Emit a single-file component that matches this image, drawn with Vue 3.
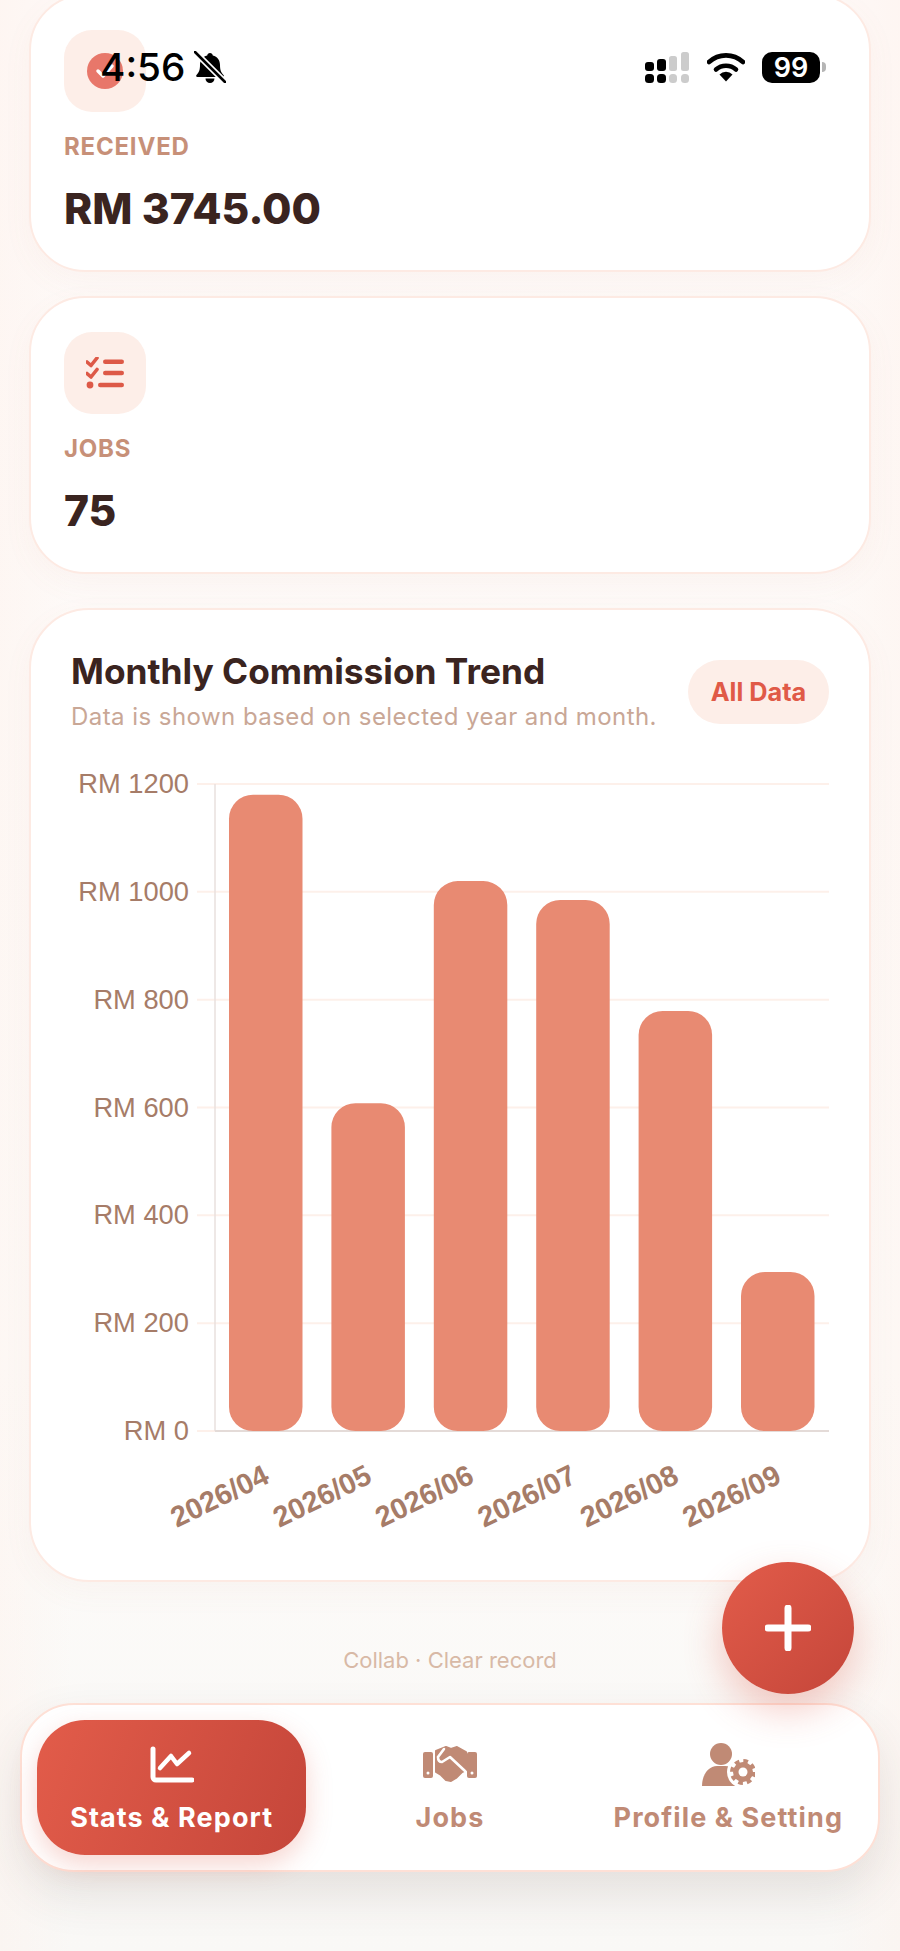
<template>
  <div class="page">
    <main class="content">
      <section class="card stat">
        <div class="stat-icon">
          <svg width="36" height="36" viewBox="0 0 36 36">
            <circle cx="18" cy="18" r="18" fill="#e8776a" />
            <path d="M11 18l5 5 9-10" fill="none" stroke="#fff" stroke-width="3.5" stroke-linecap="round" stroke-linejoin="round" />
          </svg>
        </div>
        <div class="stat-label">RECEIVED</div>
        <div class="stat-value">RM 3745.00</div>
      </section>

      <section class="card stat">
        <div class="stat-icon">
          <svg width="38" height="32" viewBox="0 0 38 32" fill="#dd5947">
            <path d="M1 5l4 3.500L11 1" fill="none" stroke="#dd5947" stroke-width="3.600" stroke-linecap="round" stroke-linejoin="round" />
            <path d="M1 16.500l4 3.500 6-7.500" fill="none" stroke="#dd5947" stroke-width="3.600" stroke-linecap="round" stroke-linejoin="round" />
            <circle cx="4" cy="28" r="3.400" />
            <rect x="17" y="2.500" width="21" height="4.400" rx="2.200" />
            <rect x="17" y="13.800" width="21" height="4.400" rx="2.200" />
            <rect x="12" y="25.800" width="26" height="4.400" rx="2.200" />
          </svg>
        </div>
        <div class="stat-label">JOBS</div>
        <div class="stat-value">75</div>
      </section>

      <section class="card trend">
        <div class="trend-head">
          <div>
            <h2>Monthly Commission Trend</h2>
            <p>Data is shown based on selected year and month.</p>
          </div>
          <span class="pill">All Data</span>
        </div>
        <svg class="chart" width="757" height="780" viewBox="72 760 757 780">
          <line v-for="t in ticks" :key="t" x1="197" x2="829" :y1="yFor(t)" :y2="yFor(t)" stroke="#fdf0ea" stroke-width="2" />
          <line x1="215" x2="215" y1="784" y2="1431" stroke="#e8e1de" stroke-width="1.500" />
          <line x1="215" x2="829" y1="1431" y2="1431" stroke="#e4dbd8" stroke-width="2" />
          <text v-for="t in ticks" :key="'l' + t" x="189" :y="yFor(t) + 9" class="y-tick" text-anchor="end">RM {{ t }}</text>
          <path v-for="(b, i) in bars" :key="b.month" :d="barPath(i, b.value)" fill="#e88a72" />
          <text
            v-for="(b, i) in bars"
            :key="'m' + b.month"
            class="x-tick"
            text-anchor="end"
            :transform="`translate(${barX(i) + 42} 1482) rotate(-26)`"
          >{{ b.month }}</text>
        </svg>
      </section>

      <p class="footer">Collab · Clear record</p>
    </main>

    <!-- status bar -->
    <div class="status">
      <div class="status-left">
        <span class="time">4:56</span>
        <svg width="32" height="32" viewBox="0 0 32 32">
          <path d="M16 2c1.600 0 2.600 1 2.800 2.400C23.500 5.600 26 9.300 26 14c0 5 1 7.500 3.500 10 .8.900.3 2-.9 2H3.400c-1.200 0-1.700-1.100-.9-2C5 21.500 6 19 6 14c0-4.700 2.500-8.400 7.200-9.600C13.400 3 14.400 2 16 2z" fill="#000" />
          <path d="M11.500 27.500h9a4.500 4.500 0 0 1-9 0z" fill="#000" />
          <path d="M1 1l30 30" stroke="#fff" stroke-width="6" />
          <path d="M1 1l30 30" stroke="#000" stroke-width="2.600" stroke-linecap="round" />
        </svg>
      </div>
      <div class="status-right">
        <svg width="46" height="32" viewBox="0 0 46 32">
          <rect x="1" y="11" width="9" height="9" rx="3" />
          <rect x="13" y="8" width="9" height="12" rx="3" />
          <rect x="25" y="5" width="8" height="15" rx="2.500" fill="#ccc" />
          <rect x="37" y="1" width="8" height="19" rx="2.500" fill="#ccc" />
          <rect x="1" y="23" width="9" height="9" rx="3.500" />
          <rect x="13" y="23" width="9" height="9" rx="3.500" />
          <rect x="25" y="23" width="8" height="9" rx="3.500" fill="#ccc" />
          <rect x="37" y="23" width="8" height="9" rx="3.500" fill="#ccc" />
        </svg>
        <svg width="38" height="30" viewBox="0 0 38 30">
          <path d="M2 10a25 25 0 0 1 34 0" fill="none" stroke="#000" stroke-width="4.600" stroke-linecap="round" />
          <path d="M9 17.500a15 15 0 0 1 20 0" fill="none" stroke="#000" stroke-width="4.600" stroke-linecap="round" />
          <path d="M19 29.500l-6.500-7a9 9 0 0 1 13 0z" fill="#000" />
        </svg>
        <div class="battery">99</div>
        <span class="battery-cap"></span>
      </div>
    </div>

    <button class="fab" type="button">
      <svg width="46" height="46" viewBox="0 0 46 46">
        <path d="M23 3v40M3 23h40" stroke="#fff" stroke-width="7" stroke-linecap="round" />
      </svg>
    </button>

    <nav class="nav">
      <a class="nav-item active">
        <svg width="44" height="44" viewBox="0 0 44 44">
          <path d="M3 7v28a3 3 0 0 0 3 3h36" fill="none" stroke="#fff" stroke-width="5" stroke-linecap="round" />
          <path d="M10 26l11-12 6 8 12-11" fill="none" stroke="#fff" stroke-width="4.500" stroke-linecap="round" stroke-linejoin="round" />
        </svg>
        <span>Stats &amp; Report</span>
      </a>
      <a class="nav-item">
        <svg width="54" height="44" viewBox="0 0 54 44">
          <rect x="0" y="10" width="10" height="26" rx="2" fill="#c08a75" />
          <rect x="44" y="10" width="10" height="26" rx="2" fill="#c08a75" />
          <circle cx="5" cy="31" r="1.500" fill="#fff" />
          <circle cx="49" cy="31" r="1.500" fill="#fff" />
          <path d="M13 9l10-4 5 2 6-2 9 5v18l-4 2-6 6-5 3-5-1-5-5-5-3z" fill="#c08a75" stroke="#c08a75" stroke-width="2" stroke-linejoin="round" />
          <path d="M21 7l-6 8q0 5 4 5l8-5 15 14" fill="none" stroke="#fff" stroke-width="2.600" stroke-linecap="round" stroke-linejoin="round" />
        </svg>
        <span>Jobs</span>
      </a>
      <a class="nav-item">
        <svg width="54" height="44" viewBox="0 0 54 44">
          <circle cx="20" cy="12" r="11" fill="#c08a75" />
          <path d="M1 44c0-12 7-20 15-20h8c8 0 13 4 15 10v10z" fill="#c08a75" />
          <circle cx="42" cy="30" r="16" fill="#fff" />
          <circle cx="42" cy="30" r="10" fill="#c08a75" />
          <circle cx="42" cy="30" r="11" fill="none" stroke="#c08a75" stroke-width="4" stroke-dasharray="4.640 4" />
          <circle cx="42" cy="30" r="4.500" fill="#fff" />
        </svg>
        <span>Profile &amp; Setting</span>
      </a>
    </nav>
  </div>
</template>

<script setup>
const ticks = [1200, 1000, 800, 600, 400, 200, 0]
const bars = [
  { month: '2026/04', value: 1180 },
  { month: '2026/05', value: 608 },
  { month: '2026/06', value: 1020 },
  { month: '2026/07', value: 985 },
  { month: '2026/08', value: 779 },
  { month: '2026/09', value: 295 },
]

const BASE = 1431
const PER_UNIT = 647 / 1200
const BAR_W = 73.5
const R = 24

function yFor(v) {
  return BASE - v * PER_UNIT
}

function barX(i) {
  return 229 + i * 102.4
}

function barPath(i, v) {
  const x = barX(i)
  const y = yFor(v)
  const w = BAR_W
  return `M${x} ${y + R}a${R} ${R} 0 0 1 ${R} ${-R}h${w - 2 * R}a${R} ${R} 0 0 1 ${R} ${R}V${BASE - R}a${R} ${R} 0 0 1 ${-R} ${R}h${-(w - 2 * R)}a${R} ${R} 0 0 1 ${-R} ${-R}z`
}
</script>

<style>
html,
body {
  margin: 0;
  background: #fcf9f7;
}
</style>

<style scoped>
.page {
  position: relative;
  width: 900px;
  height: 1951px;
  overflow: hidden;
  font-family: Inter, "Noto Sans", sans-serif;
  background:
    linear-gradient(90deg, rgba(255, 236, 228, 0.25), rgba(255, 255, 255, 0) 8%, rgba(255, 255, 255, 0) 92%, rgba(255, 236, 228, 0.25)),
    linear-gradient(180deg, #fef9f7, #fdfbf9 70%, #f9f8f6);
}
.content {
  display: flex;
  flex-direction: column;
  gap: 24px;
  padding: 0 29px;
  margin-top: -6px;
}
.card {
  background: #fff;
  border: 2px solid #fdeae3;
  border-radius: 56px;
  box-shadow: 0 10px 30px rgba(190, 120, 90, 0.05);
}
.stat {
  height: 278px;
  box-sizing: border-box;
  padding: 34px 33px;
}
.stat-icon {
  width: 82px;
  height: 82px;
  border-radius: 28px;
  background: #fdeee8;
  display: flex;
  align-items: center;
  justify-content: center;
}
.stat-label {
  margin-top: 21px;
  font-size: 24px;
  line-height: 28px;
  font-weight: 700;
  letter-spacing: 0.8px;
  color: #c79078;
}
.stat-value {
  margin-top: 22px;
  font-size: 42.6px;
  line-height: 52px;
  font-weight: 800;
  color: #3a2420;
}
.trend {
  margin-top: 10px;
  height: 974px;
  box-sizing: border-box;
  padding: 40px 40px 0 40px;
  border-radius: 60px;
}
.trend-head {
  display: flex;
  align-items: center;
  justify-content: space-between;
}
h2 {
  margin: 0;
  font-size: 35.3px;
  line-height: 44px;
  font-weight: 700;
  color: #3a2420;
}
.trend-head p {
  margin: 7px 0 0;
  font-size: 24px;
  line-height: 32px;
  letter-spacing: 0.45px;
  color: #c9a796;
}
.pill {
  width: 141px;
  height: 64px;
  border-radius: 32px;
  background: #fdeee8;
  color: #e05a47;
  font-size: 25.3px;
  font-weight: 700;
  display: flex;
  align-items: center;
  justify-content: center;
}
.chart {
  display: block;
  margin-top: 27px;
  margin-left: 1px;
  overflow: visible;
}
.y-tick {
  font-family: "Liberation Sans", Arial, sans-serif;
  font-size: 27.3px;
  fill: #a67c68;
}
.x-tick {
  font-family: "Liberation Sans", Arial, sans-serif;
  font-size: 29px;
  font-weight: 700;
  fill: #a67c68;
}
.footer {
  margin: 40px 0 0;
  text-align: center;
  font-size: 22px;
  line-height: 28px;
  color: #d8b9a6;
}
.status {
  position: absolute;
  top: 48px;
  left: 100px;
  right: 74px;
  display: flex;
  justify-content: space-between;
  align-items: center;
}
.status-left {
  display: flex;
  align-items: center;
  gap: 9px;
}
.time {
  font-size: 38.7px;
  line-height: 38px;
  font-weight: 500;
  color: #000;
}
.status-right {
  display: flex;
  align-items: center;
  gap: 17px;
}
.battery {
  width: 58px;
  height: 31px;
  border-radius: 10px;
  background: #000;
  color: #fff;
  font-size: 27px;
  font-weight: 600;
  line-height: 31px;
  text-align: center;
}
.battery-cap {
  width: 4px;
  height: 10px;
  margin-left: -15px;
  border-radius: 0 4px 4px 0;
  background: #b5b5b5;
}
.fab {
  position: absolute;
  left: 722px;
  top: 1562px;
  z-index: 2;
  width: 132px;
  height: 132px;
  padding: 0;
  border: none;
  border-radius: 50%;
  background: linear-gradient(135deg, #e25c4a, #c5463a);
  box-shadow: 0 16px 38px rgba(224, 90, 71, 0.32);
  display: flex;
  align-items: center;
  justify-content: center;
}
.nav {
  position: absolute;
  left: 20px;
  top: 1703px;
  width: 860px;
  height: 169px;
  box-sizing: border-box;
  padding: 15px;
  border: 2px solid #fee0d6;
  border-radius: 54px;
  background: #fff;
  box-shadow: 0 22px 48px rgba(70, 50, 40, 0.12);
  display: grid;
  grid-template-columns: repeat(3, 1fr);
  gap: 9px;
}
.nav-item {
  display: flex;
  flex-direction: column;
  align-items: center;
  justify-content: center;
  gap: 16px;
  border-radius: 48px;
  color: #c08a75;
}
.nav-item span {
  font-size: 27px;
  line-height: 32px;
  font-weight: 700;
  letter-spacing: 1.1px;
}
.nav-item.active {
  color: #fff;
  background: linear-gradient(110deg, #e25c4a, #c5463a);
  box-shadow: 0 10px 26px rgba(224, 90, 71, 0.25);
}
</style>
